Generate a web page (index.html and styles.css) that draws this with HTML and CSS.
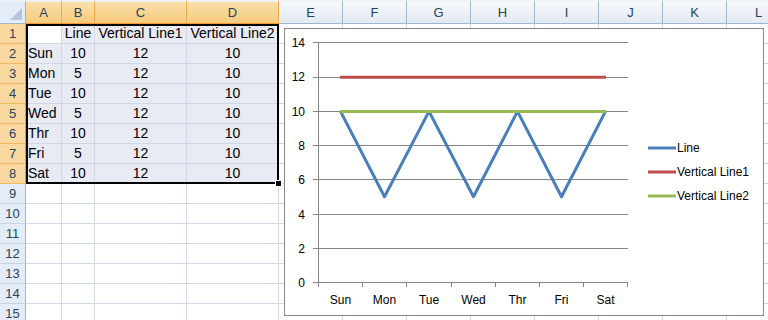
FILE: index.html
```html
<!DOCTYPE html>
<html lang="en">
<head>
    <meta charset="UTF-8">
    <title>Line chart with horizontal lines</title>
    <link rel="stylesheet" href="styles.css">
</head>
<body>
<div class="sheet">
    <div class="corner"></div>
    <div class="ch sel">A</div><div class="ch sel">B</div><div class="ch sel">C</div><div class="ch sel">D</div>
    <div class="ch">E</div><div class="ch">F</div><div class="ch">G</div><div class="ch">H</div><div class="ch">I</div><div class="ch">J</div><div class="ch">K</div><div class="ch">L</div>

    <div class="rh sel">1</div><div class="c"></div><div class="c in mid">Line</div><div class="c in mid">Vertical Line1</div><div class="c in mid">Vertical Line2</div>
    <div class="c"></div><div class="c"></div><div class="c"></div><div class="c"></div><div class="c"></div><div class="c"></div><div class="c"></div><div class="c"></div>

    <div class="rh sel">2</div><div class="c in">Sun</div><div class="c in mid">10</div><div class="c in mid">12</div><div class="c in mid">10</div>
    <div class="c"></div><div class="c"></div><div class="c"></div><div class="c"></div><div class="c"></div><div class="c"></div><div class="c"></div><div class="c"></div>

    <div class="rh sel">3</div><div class="c in">Mon</div><div class="c in mid">5</div><div class="c in mid">12</div><div class="c in mid">10</div>
    <div class="c"></div><div class="c"></div><div class="c"></div><div class="c"></div><div class="c"></div><div class="c"></div><div class="c"></div><div class="c"></div>

    <div class="rh sel">4</div><div class="c in">Tue</div><div class="c in mid">10</div><div class="c in mid">12</div><div class="c in mid">10</div>
    <div class="c"></div><div class="c"></div><div class="c"></div><div class="c"></div><div class="c"></div><div class="c"></div><div class="c"></div><div class="c"></div>

    <div class="rh sel">5</div><div class="c in">Wed</div><div class="c in mid">5</div><div class="c in mid">12</div><div class="c in mid">10</div>
    <div class="c"></div><div class="c"></div><div class="c"></div><div class="c"></div><div class="c"></div><div class="c"></div><div class="c"></div><div class="c"></div>

    <div class="rh sel">6</div><div class="c in">Thr</div><div class="c in mid">10</div><div class="c in mid">12</div><div class="c in mid">10</div>
    <div class="c"></div><div class="c"></div><div class="c"></div><div class="c"></div><div class="c"></div><div class="c"></div><div class="c"></div><div class="c"></div>

    <div class="rh sel">7</div><div class="c in">Fri</div><div class="c in mid">5</div><div class="c in mid">12</div><div class="c in mid">10</div>
    <div class="c"></div><div class="c"></div><div class="c"></div><div class="c"></div><div class="c"></div><div class="c"></div><div class="c"></div><div class="c"></div>

    <div class="rh sel">8</div><div class="c in">Sat</div><div class="c in mid">10</div><div class="c in mid">12</div><div class="c in mid">10</div>
    <div class="c"></div><div class="c"></div><div class="c"></div><div class="c"></div><div class="c"></div><div class="c"></div><div class="c"></div><div class="c"></div>

    <div class="rh">9</div><div class="c"></div><div class="c"></div><div class="c"></div><div class="c"></div><div class="c"></div><div class="c"></div><div class="c"></div><div class="c"></div><div class="c"></div><div class="c"></div><div class="c"></div><div class="c"></div>
    <div class="rh">10</div><div class="c"></div><div class="c"></div><div class="c"></div><div class="c"></div><div class="c"></div><div class="c"></div><div class="c"></div><div class="c"></div><div class="c"></div><div class="c"></div><div class="c"></div><div class="c"></div>
    <div class="rh">11</div><div class="c"></div><div class="c"></div><div class="c"></div><div class="c"></div><div class="c"></div><div class="c"></div><div class="c"></div><div class="c"></div><div class="c"></div><div class="c"></div><div class="c"></div><div class="c"></div>
    <div class="rh">12</div><div class="c"></div><div class="c"></div><div class="c"></div><div class="c"></div><div class="c"></div><div class="c"></div><div class="c"></div><div class="c"></div><div class="c"></div><div class="c"></div><div class="c"></div><div class="c"></div>
    <div class="rh">13</div><div class="c"></div><div class="c"></div><div class="c"></div><div class="c"></div><div class="c"></div><div class="c"></div><div class="c"></div><div class="c"></div><div class="c"></div><div class="c"></div><div class="c"></div><div class="c"></div>
    <div class="rh">14</div><div class="c"></div><div class="c"></div><div class="c"></div><div class="c"></div><div class="c"></div><div class="c"></div><div class="c"></div><div class="c"></div><div class="c"></div><div class="c"></div><div class="c"></div><div class="c"></div>
    <div class="rh">15</div><div class="c"></div><div class="c"></div><div class="c"></div><div class="c"></div><div class="c"></div><div class="c"></div><div class="c"></div><div class="c"></div><div class="c"></div><div class="c"></div><div class="c"></div><div class="c"></div>

    <!-- selected range A1:D8 -->
    <div class="range"><span class="handle"></span></div>

    <!-- chart object -->
    <div class="chart">
        <svg width="478" height="286" viewBox="285 29 478 286">
            <g class="grid">
                <line x1="313" y1="42.5" x2="628" y2="42.5"/>
                <line x1="313" y1="77.5" x2="628" y2="77.5"/>
                <line x1="313" y1="111.5" x2="628" y2="111.5"/>
                <line x1="313" y1="145.5" x2="628" y2="145.5"/>
                <line x1="313" y1="179.5" x2="628" y2="179.5"/>
                <line x1="313" y1="214.5" x2="628" y2="214.5"/>
                <line x1="313" y1="248.5" x2="628" y2="248.5"/>
                <line x1="313" y1="282.5" x2="628" y2="282.5"/>
                <line x1="318.5" y1="42" x2="318.5" y2="287"/>
                <line x1="362.5" y1="282" x2="362.5" y2="287"/>
                <line x1="406.5" y1="282" x2="406.5" y2="287"/>
                <line x1="451.5" y1="282" x2="451.5" y2="287"/>
                <line x1="495.5" y1="282" x2="495.5" y2="287"/>
                <line x1="539.5" y1="282" x2="539.5" y2="287"/>
                <line x1="583.5" y1="282" x2="583.5" y2="287"/>
                <line x1="627.5" y1="282" x2="627.5" y2="287"/>
            </g>
            <g class="ylab">
                <text x="305" y="47">14</text>
                <text x="305" y="81">12</text>
                <text x="305" y="115.5">10</text>
                <text x="305" y="149.5">8</text>
                <text x="305" y="183.5">6</text>
                <text x="305" y="218.5">4</text>
                <text x="305" y="252.5">2</text>
                <text x="305" y="286.5">0</text>
            </g>
            <g class="xlab">
                <text x="340.5" y="304">Sun</text>
                <text x="384.5" y="304">Mon</text>
                <text x="429" y="304">Tue</text>
                <text x="473.5" y="304">Wed</text>
                <text x="517.5" y="304">Thr</text>
                <text x="561.5" y="304">Fri</text>
                <text x="605.5" y="304">Sat</text>
            </g>
            <polyline class="s1" points="340.5,111.4 384.5,196.8 429,111.4 473.5,196.8 517.5,111.4 561.5,196.8 605.5,111.4"/>
            <line class="s2" x1="340" y1="77.2" x2="606" y2="77.2"/>
            <line class="s3" x1="340" y1="111.4" x2="606" y2="111.4"/>
            <g class="legend">
                <line class="s1" x1="648" y1="148" x2="676" y2="148"/>
                <text x="677" y="152">Line</text>
                <line class="s2" x1="648" y1="172" x2="676" y2="172"/>
                <text x="677" y="176">Vertical Line1</text>
                <line class="s3" x1="648" y1="196" x2="676" y2="196"/>
                <text x="677" y="200">Vertical Line2</text>
            </g>
        </svg>
    </div>
</div>
</body>
</html>
```

FILE: styles.css
```css
body{margin:0;overflow:hidden;background:#fff;font-family:"Liberation Sans",Arial,sans-serif;}
.sheet{position:relative;display:grid;grid-template-columns:26px 36px 33px 92px 92px repeat(8,64px);grid-template-rows:24px;grid-auto-rows:20px;width:790px;}
.sheet > div{box-sizing:border-box;}

/* headers */
.corner{background:#e4ecf7;border-right:1px solid #9eb6ce;border-bottom:1px solid #9eb6ce;border-top:2px solid #eef3fa;position:relative;}
.corner:after{content:"";position:absolute;right:3px;bottom:3px;border-left:12px solid transparent;border-bottom:12px solid #b4c6dc;}
.ch{background:linear-gradient(#f7f9fc,#e3e9f2);border-top:2px solid #eef3fa;border-right:1px solid #9eb6ce;border-bottom:1px solid #9eb6ce;color:#27415f;font-size:13px;line-height:21px;text-align:center;}
.ch.sel{background:linear-gradient(#fadfa9,#f6cb7d);border-right-color:#f2a94e;border-bottom-color:#f29536;}
.rh{background:#e4ecf7;border-right:1px solid #9eb6ce;border-bottom:1px solid #c5d3e4;color:#27415f;font-size:13px;line-height:19px;text-align:center;}
.rh.sel{background:#f9d99f;border-right-color:#f29536;border-bottom-color:#f2b75f;}

/* cells */
.c{border-right:1px solid #d0d7e5;border-bottom:1px solid #d0d7e5;font-size:14px;line-height:19px;padding:0 2px;white-space:nowrap;overflow:hidden;color:#000;}
.c.in{background:#e8eaf4;}
.c.mid{text-align:center;}

.range{position:absolute;left:26px;top:24px;width:253px;height:160px;border:2px solid #000;box-sizing:border-box;pointer-events:none;}
.handle{position:absolute;right:-5px;bottom:-5px;width:5px;height:5px;background:#000;border:1px solid #fff;}

/* chart */
.chart{position:absolute;left:284px;top:28px;width:480px;height:288px;box-sizing:border-box;border:1px solid #868686;background:#fff;}
.chart svg{display:block;}
.grid line{stroke:#868686;stroke-width:1;}
.chart text{font-family:"Liberation Sans",Arial,sans-serif;font-size:12px;fill:#000;}
.ylab text{text-anchor:end;}
.xlab text{text-anchor:middle;}
.s1,.s2,.s3{fill:none;stroke-width:3;stroke-linejoin:round;}
.s1{stroke:#4a7ebb;}
.s2{stroke:#be4b48;}
.s3{stroke:#98b954;}
```
